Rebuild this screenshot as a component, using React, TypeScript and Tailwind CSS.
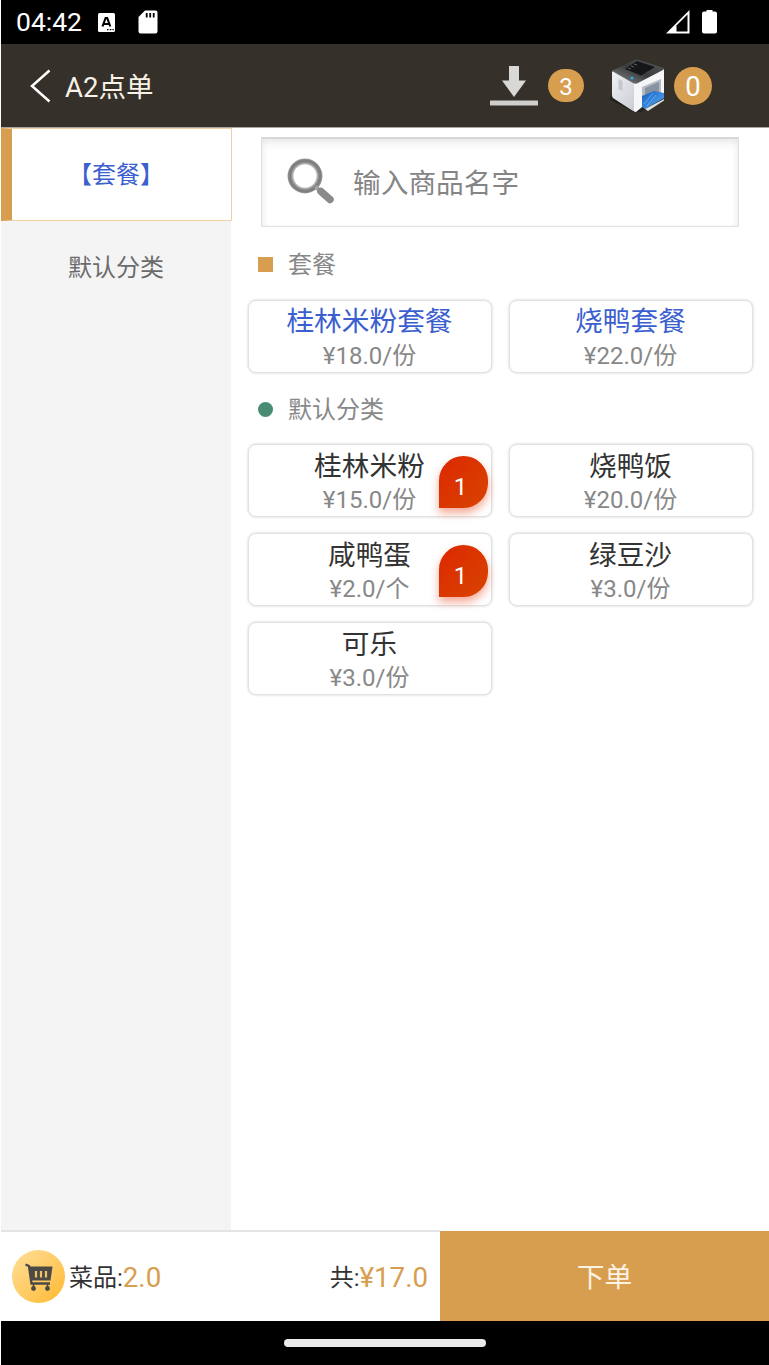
import { useState } from "react";
import clsx from "clsx";

type Product = {
  id: number;
  name: string;
  price: number;
  unit: string;
  count?: number;
};

type Category = {
  id: string;
  title: string;
  label: string;
  combo: boolean;
  products: Product[];
};

const CATEGORIES: Category[] = [
  {
    id: "combo",
    title: "套餐",
    label: "【套餐】",
    combo: true,
    products: [
      { id: 1, name: "桂林米粉套餐", price: 18, unit: "份" },
      { id: 2, name: "烧鸭套餐", price: 22, unit: "份" },
    ],
  },
  {
    id: "default",
    title: "默认分类",
    label: "默认分类",
    combo: false,
    products: [
      { id: 3, name: "桂林米粉", price: 15, unit: "份", count: 1 },
      { id: 4, name: "烧鸭饭", price: 20, unit: "份" },
      { id: 5, name: "咸鸭蛋", price: 2, unit: "个", count: 1 },
      { id: 6, name: "绿豆沙", price: 3, unit: "份" },
      { id: 7, name: "可乐", price: 3, unit: "份" },
    ],
  },
];

function StatusBar() {
  return (
    <div className="flex h-11 shrink-0 items-center bg-black pl-[15px] pr-[52px] text-white">
      <span className="w-[82px] text-[26.5px] leading-none">04:42</span>
      <svg className="h-[19px] w-[17px]" viewBox="0 0 17 19">
        <rect width="17" height="19" rx="1.5" fill="#fff" />
        <path d="M4.500 13.500 7.600 5h1.600L12.300 13.500M6 11h5" stroke="#000" strokeWidth="2.1" fill="none" />
        <path d="M9 16.6h1.6M11.8 16.6h1.6M14.4 16.6h1.4" stroke="#000" strokeWidth="1.4" />
      </svg>
      <svg className="mb-px ml-[23px] h-[24px] w-[20px]" viewBox="0 0 20 24">
        <path d="M7 .5h10.5A2 2 0 0 1 19.5 2.500v19a2 2 0 0 1-2 2h-15a2 2 0 0 1-2-2V7Z" fill="#fff" />
        <path d="M8.700 3v4.500M12.200 3v4.500M15.700 3v4.500" stroke="#000" strokeWidth="1.800" />
      </svg>
      <svg className="mb-px ml-auto h-[24px] w-[24px]" viewBox="0 0 24 24">
        <path d="M0 23.500 23.500 0v23.500Z" fill="#fff" />
        <path d="M10.500 15.500 21.500 4.500v17H10.500Z" fill="#000" />
      </svg>
      <svg className="mb-px ml-[12px] h-[24px] w-[15px]" viewBox="0 0 15 24">
        <path d="M4.500 0h6v1.500H13a2 2 0 0 1 2 2v18a2 2 0 0 1-2 2H2a2 2 0 0 1-2-2v-18a2 2 0 0 1 2-2h2.500Z" fill="#fff" />
      </svg>
    </div>
  );
}

function PrinterIcon() {
  return (
    <svg className="h-[56px] w-[58px]" viewBox="0 0 58 56">
      <defs>
        <linearGradient id="printer-side" x1="0" y1="0" x2="1" y2="1">
          <stop offset="0" stopColor="#f1f2f4" />
          <stop offset="1" stopColor="#c6cad1" />
        </linearGradient>
        <linearGradient id="printer-top" x1="0" y1="1" x2="1" y2="0">
          <stop offset="0" stopColor="#8a8b8c" />
          <stop offset="0.5" stopColor="#3a3b3c" />
          <stop offset="1" stopColor="#5a5b5c" />
        </linearGradient>
        <linearGradient id="printer-paper" x1="0" y1="0" x2="1" y2="1">
          <stop offset="0" stopColor="#165cb8" />
          <stop offset="1" stopColor="#57b0ff" />
        </linearGradient>
      </defs>
      <path d="M0 41 3 36 28 53 54 40 56 42 32 54 24 54Z" fill="#1b1916" opacity="0.6" />
      <path d="M3 14 4.500 12 28 25 27 54 24 53 4 40Q3 39 3 37Z" fill="url(#printer-side)" />
      <path d="M9.500 21v10l4 2.500V23Z" fill="#c3c8d0" />
      <path d="M25 24 54 10.500 55 12v25L33 49 27 54 25 53Z" fill="#f5f6f7" />
      <path d="M3 13 25 2Q27 1 30 2L55 10 54 12 28 25.500Q26 26 24 25Z" fill="url(#printer-top)" />
      <path d="M16 11 28 3 46 9 32 17.500Z" fill="#151617" />
      <path d="m19 10 3 1M22 8l3 1M25 6l3 1" stroke="#4a6670" strokeWidth="1" />
      <circle cx="23" cy="20" r="1.600" fill="#33a5e8" />
      <path d="M33 29 52 21v18L33 49Z" fill="#b3bac4" />
      <path d="M36 30 50 24v12l-14 7Z" fill="#8893a1" />
      <path d="M33 38 45 33 55 35v5L36 51 33 49Z" fill="url(#printer-paper)" />
      <path d="M35 46 44 35M38 48l9-11" stroke="#6eb4f5" strokeWidth="0.800" />
      <path d="M36 51 55 41v1.500L39 53Z" fill="#dfe1e4" />
    </svg>
  );
}

function Header() {
  return (
    <header className="flex h-[84px] shrink-0 items-center border-b border-[#aaa5a0] bg-[#35312a] text-[#f8f1e7]">
      <svg className="ml-[29px] h-[34px] w-[21px]" viewBox="0 0 21 34">
        <path d="M19.500 1.500 2 17l17.500 15.500" fill="none" stroke="#fff" strokeWidth="2.500" />
      </svg>
      <span className="ml-[14px] pt-[4px] text-[27.5px] leading-none">A2点单</span>
      <svg className="ml-auto h-[42px] w-[50px]" viewBox="0 0 50 42">
        <path d="M20 1h10v14.500h7L25 32 13 15.500h7Z" fill="#d8d8d6" />
        <rect x="1" y="35.500" width="48" height="5" rx="0.500" fill="#cfcfcd" />
      </svg>
      <span className="ml-[9px] flex h-[33px] w-[36px] items-center justify-center rounded-full bg-[#d89e4f] pt-0.5 text-2xl text-white">
        3
      </span>
      <div className="ml-[25px]">
        <PrinterIcon />
      </div>
      <span className="ml-[7px] mr-[57px] flex size-[38px] items-center justify-center rounded-full bg-[#d89e4f] pt-0.5 text-[27.5px] text-white">
        0
      </span>
    </header>
  );
}

function SearchBox() {
  return (
    <div className="mx-[30px] mt-[9px] flex h-[90px] items-center border border-t-2 border-[#e0e0e0] border-t-[#d8d8d8] pl-[25px] shadow-[inset_0_6px_10px_-3px_#e6e6e6,inset_3px_0_6px_-3px_#eee,inset_-3px_0_6px_-3px_#eee]">
      <svg className="mb-px h-[48px] w-[48px]" viewBox="0 0 48 48">
        <defs>
          <radialGradient id="lens" gradientUnits="userSpaceOnUse" cx="18" cy="18" r="18">
            <stop offset="0.62" stopColor="#d2d2d2" />
            <stop offset="0.8" stopColor="#7c7c7c" />
            <stop offset="0.9" stopColor="#828282" />
            <stop offset="1" stopColor="#b5b5b5" />
          </radialGradient>
        </defs>
        <circle cx="18" cy="18" r="14.500" fill="none" stroke="url(#lens)" strokeWidth="6" />
        <path d="m28.500 28.500 4 4" stroke="#a5a5a5" strokeWidth="4" />
        <path d="m34 33.500 9 8" stroke="#8a8a8a" strokeWidth="7.500" strokeLinecap="round" />
      </svg>
      <input
        type="text"
        placeholder="输入商品名字"
        className="ml-[18px] min-w-0 flex-1 pt-0.5 text-[27.7px] outline-none placeholder:text-[#858585]"
      />
    </div>
  );
}

function ProductCard({ product, combo }: { product: Product; combo: boolean }) {
  return (
    <button className="relative h-[73px] rounded-lg border border-[#e2e2e2] bg-white text-center shadow-[0_0_2px_1px_#e9e9e9]">
      <div
        className={clsx(
          "h-[37px] pr-px text-[27.7px]",
          combo ? "leading-[41px] text-[#3c5fd0]" : "leading-[43px] text-[#333]"
        )}
      >
        {product.name}
      </div>
      <div className="h-[34px] pr-px text-2xl leading-[36px] text-[#888]">
        ¥{product.price.toFixed(1)}/{product.unit}
      </div>
      {product.count && (
        <span className="absolute right-[3px] top-[11px] flex h-[52px] w-[49px] items-center justify-center rounded-full rounded-bl-none bg-linear-to-br from-[#dc2600] to-[#d84300] pr-[6px] pt-[10px] text-2xl text-white shadow-[0_5px_8px_#e9533080]">
          {product.count}
        </span>
      )}
    </button>
  );
}

function CategorySection({ category }: { category: Category }) {
  return (
    <section>
      <div
        className={clsx(
          "flex items-center pl-[27px]",
          category.combo ? "h-[73px] pt-0.5" : "h-[71px] pt-0.5"
        )}
      >
        <span
          className={clsx(
            "size-[15px]",
            category.combo ? "bg-[#d89e4f]" : "rounded-full bg-[#478c73]"
          )}
        />
        <h2 className="ml-[15px] pt-px text-2xl text-[#888]">{category.title}</h2>
      </div>
      <div className="grid grid-cols-2 gap-x-[17px] gap-y-4 pl-[17px] pr-4">
        {category.products.map((p) => (
          <ProductCard key={p.id} product={p} combo={category.combo} />
        ))}
      </div>
    </section>
  );
}

function CartIcon() {
  return (
    <span className="flex size-[53px] items-center justify-center rounded-full bg-linear-to-br from-[#ffdf97] to-[#ffb91f]">
      <svg className="h-[28px] w-[28px]" viewBox="0 0 28 28">
        <path d="M.5 1.500 4 3 6.500 20.500H25" fill="none" stroke="#4d4a46" strokeWidth="2.400" />
        <path d="M4 3.500h23.500L25.500 17.500H6.500Z" fill="#4d4a46" />
        <path d="M11 8v6.500M16 8v6.500M21 8v6.500" stroke="#f0c466" strokeWidth="2.200" />
        <circle cx="8.500" cy="25.500" r="2.400" fill="#4d4a46" />
        <circle cx="22.500" cy="25.500" r="2.400" fill="#4d4a46" />
        <path d="M8.500 21v4M22.500 21v4" stroke="#4d4a46" strokeWidth="1.500" />
      </svg>
    </span>
  );
}

export default function App() {
  const [active, setActive] = useState("combo");
  const cart = CATEGORIES.flatMap((c) => c.products).filter((p) => p.count);
  const count = cart.reduce((sum, p) => sum + (p.count ?? 0), 0);
  const total = cart.reduce((sum, p) => sum + p.price * (p.count ?? 0), 0);

  return (
    <div className="flex h-[1365px] w-[769px] flex-col overflow-hidden bg-white pl-px font-['Roboto','Noto_Sans_CJK_SC',sans-serif]">
      <StatusBar />
      <Header />

      <div className="flex min-h-0 flex-1">
        {/* 分类 */}
        <nav className="w-[230px] shrink-0 bg-[#f4f4f4]">
          {CATEGORIES.map((c) => (
            <button
              key={c.id}
              onClick={() => setActive(c.id)}
              className={clsx(
                "block h-[93px] text-center text-2xl",
                active === c.id
                  ? "w-[231px] border border-l-[11px] border-[#efcfa5] border-l-[#d89e4f] bg-white pr-[11px] text-[#3c5fd0]"
                  : "w-full text-[#6b6b6b]"
              )}
            >
              {c.label}
            </button>
          ))}
        </nav>

        {/* 商品 */}
        <main className="min-w-0 flex-1">
          <SearchBox />
          {CATEGORIES.map((c) => (
            <CategorySection key={c.id} category={c} />
          ))}
        </main>
      </div>

      <footer className="flex h-[91px] shrink-0">
        <div className="flex w-[439px] items-center border-t-2 border-[#e4e4e4] pl-[11px] pr-3 text-2xl text-[#333]">
          <CartIcon />
          <span className="ml-1 flex items-center pt-[3px]">
            菜品:<span className="text-[27.7px] text-[#d89e4f]">{count.toFixed(1)}</span>
          </span>
          <span className="ml-auto flex items-center pt-[3px]">
            共:<span className="text-[27.7px] text-[#d89e4f]">¥{total.toFixed(1)}</span>
          </span>
        </div>
        <button className="mt-px flex-1 bg-[#d89e4f] pt-[3px] text-[27.7px] text-[#fcf2e3]">下单</button>
      </footer>

      <div className="flex h-11 shrink-0 items-center justify-center bg-black">
        <div className="h-2 w-[202px] rounded-full bg-[#ebebeb]" />
      </div>
    </div>
  );
}
